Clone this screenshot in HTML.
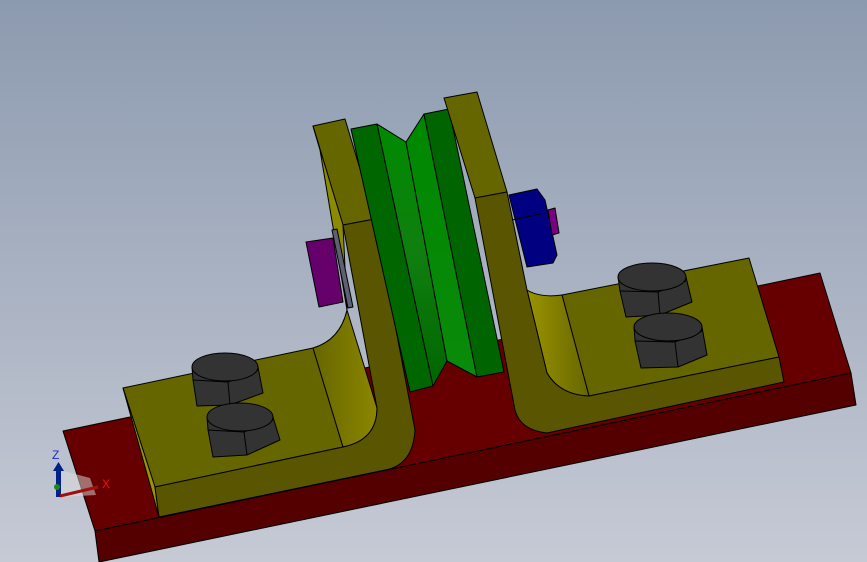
<!DOCTYPE html>
<html><head><style>
html,body{margin:0;padding:0;width:867px;height:562px;overflow:hidden}
svg{display:block}
text{font-family:"Liberation Sans",sans-serif}
</style></head><body>
<svg width="867" height="562" viewBox="0 0 867 562" xmlns="http://www.w3.org/2000/svg">
<defs>
<linearGradient id="bg" x1="0" y1="0" x2="0" y2="1">
<stop offset="0" stop-color="#8c9aaf"/><stop offset="1" stop-color="#c6cad5"/></linearGradient>
<linearGradient id="curveL" x1="0" y1="0" x2="1" y2="0">
<stop offset="0" stop-color="#666600"/><stop offset="1" stop-color="#8c8600"/></linearGradient>
<linearGradient id="curveR" x1="0" y1="0" x2="1" y2="0">
<stop offset="0" stop-color="#9a9400"/><stop offset="1" stop-color="#666600"/></linearGradient>
<linearGradient id="gB" x1="0" y1="0" x2="0" y2="1">
<stop offset="0" stop-color="#008a00"/><stop offset=".5" stop-color="#0f7f0f"/><stop offset="1" stop-color="#006600"/></linearGradient>
<linearGradient id="gC" x1="0" y1="0" x2="0" y2="1">
<stop offset="0" stop-color="#008800"/><stop offset="1" stop-color="#0a8a0a"/></linearGradient>
</defs>
<rect width="867" height="562" fill="url(#bg)"/>
<g stroke="#000" stroke-width="1" stroke-linejoin="round">
<polygon points="63,431 820,273 851,373 95,531" fill="#660000"/>
<polygon points="95,531 851,373 856,405 99,562" fill="#550000"/>
<polygon points="313,126 345,119 375,219 343,225" fill="#666600"/>
<polygon points="313,126 320,150 347,310 343,225" fill="#8c8a00"/>
<polygon points="123,388 313,348 343,447 155,487" fill="#666600"/>
<polygon points="123,388 155,487 159,517" fill="#9a9400"/>
<path d="M313,348 Q340,340 347,310 L377,408 Q377,440 343,447 Z" fill="url(#curveL)"/>
<path d="M343,225 L375,219 L415,430 Q413,465 385,470 L159,517 L155,487 L343,447 Q377,440 377,408 Z" fill="#5a5500"/>
<polygon points="351,129 377,124 433,386 410,392" fill="#006600"/>
<polygon points="377,124 406,142 447,361 433,386" fill="url(#gB)"/>
<polygon points="406,142 424,114 477,377 447,361" fill="url(#gC)"/>
<polygon points="424,114 449,109 504,372 477,377" fill="#006400"/>
<polygon points="444,98 477,92 507,192 475,198" fill="#666600"/>
<polygon points="562,295 749,258 779,357 589,396" fill="#666600"/>
<path d="M527,290 Q540,298 562,295 L589,396 Q560,395 547,373 Z" fill="url(#curveR)"/>
<path d="M475,198 L507,192 L527,290 L547,373 Q560,395 589,396 L779,357 L784,382 L547,433 Q520,430 515,410 Z" fill="#5a5500"/>
<polygon points="306,242 333,238 343,302 319,307" fill="#66006a"/>
<polygon points="332,230 337,229 353,307 348,308" fill="#5c6070"/>
<polygon points="509,195 537,189 545,200 557,255 553,263 527,267" fill="#000080"/>
<line x1="512" y1="220" x2="545" y2="213"/>
<polygon points="548,210 555,208 559,233 552,235" fill="#7a0080"/>
<!-- bolts -->
<g fill="#333">
<polygon points="192,367 258,367 263,393 230,405 197,406 193,380"/>
<polyline points="193,380 228,382 258,370" fill="none"/><line x1="228" y1="382" x2="230" y2="405"/>
<ellipse cx="225" cy="367" rx="33" ry="14"/>
<polygon points="207,417 273,417 280,440 247,455 213,457 208,430"/>
<polyline points="208,430 244,432 273,420" fill="none"/><line x1="244" y1="432" x2="247" y2="455"/>
<ellipse cx="240" cy="417" rx="33" ry="14"/>
<polygon points="618,277 686,277 692,302 660,315 626,317 620,291"/>
<polyline points="620,291 658,292 686,281" fill="none"/><line x1="658" y1="292" x2="660" y2="315"/>
<ellipse cx="652" cy="277" rx="34" ry="14"/>
<polygon points="634,327 702,327 707,355 678,367 641,368 635,341"/>
<polyline points="635,341 675,342 702,331" fill="none"/><line x1="675" y1="342" x2="678" y2="367"/>
<ellipse cx="668" cy="327" rx="34" ry="14"/>
</g>
</g>
<path d="M60,497 L60,470 L90,478 L96,495 Z" fill="#ddd" opacity=".5"/>
<rect x="56" y="469" width="5" height="28" fill="#00208a"/>
<polygon points="53,471 58.5,462 64,471" fill="#00208a"/>
<circle cx="57" cy="487" r="3" fill="#1a8a1a"/>
<line x1="60" y1="496" x2="98" y2="487" stroke="#a01010" stroke-width="3"/>
<text x="52" y="459" font-size="12" fill="#1a2ae0">Z</text>
<text x="102" y="488" font-size="12" fill="#f01010">X</text>
</svg>
</body></html>
